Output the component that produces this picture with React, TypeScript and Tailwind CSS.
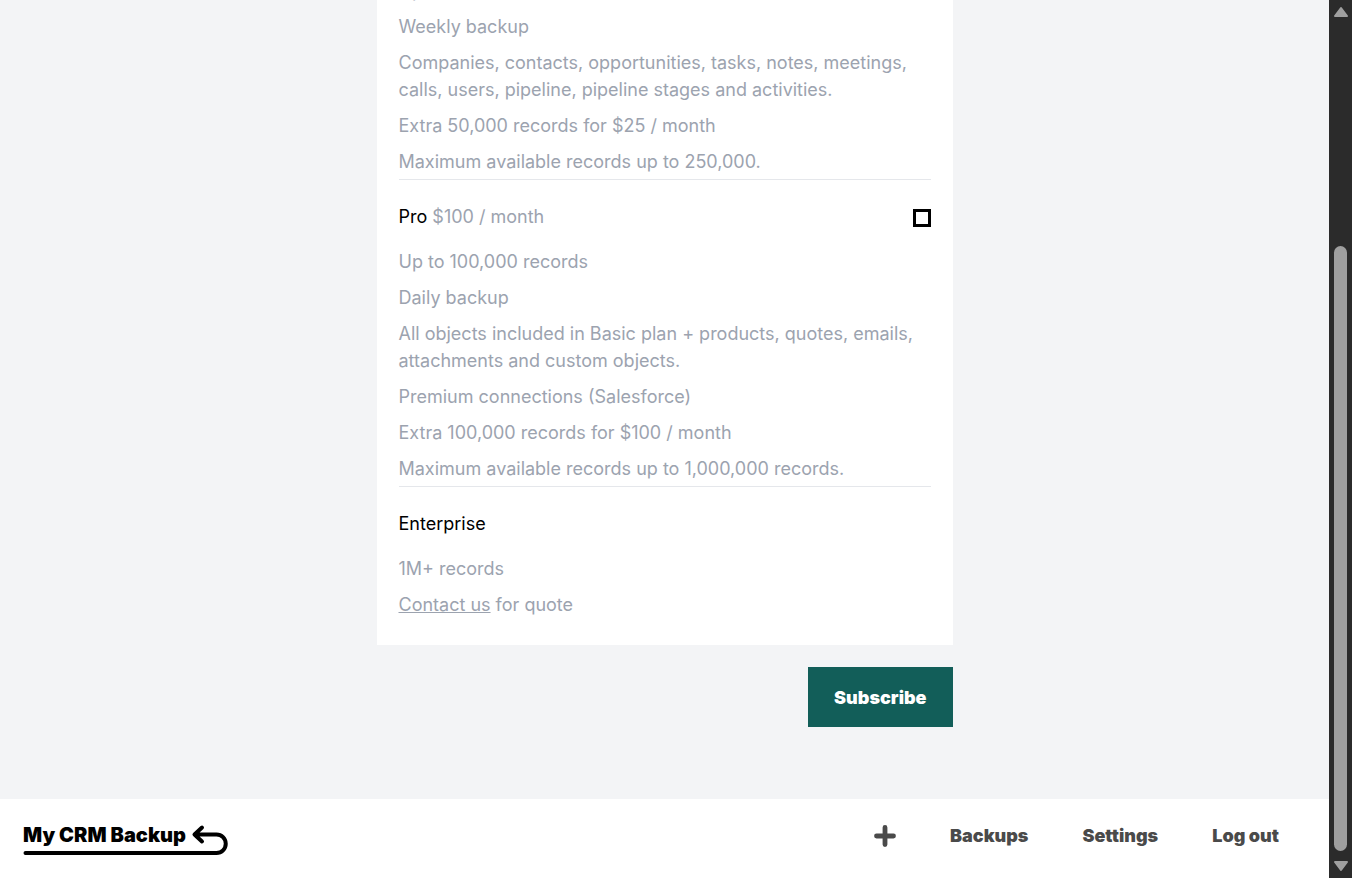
import { useState } from 'react';

interface Plan {
  id: string;
  name: string;
  price: string;
  features: string[];
}

const plans: Plan[] = [
  {
    id: 'basic',
    name: 'Basic',
    price: '$25 / month',
    features: [
      'Up to 50,000 records',
      'Weekly backup',
      'Companies, contacts, opportunities, tasks, notes, meetings, calls, users, pipeline, pipeline stages and activities.',
      'Extra 50,000 records for $25 / month',
      'Maximum available records up to 250,000.',
    ],
  },
  {
    id: 'pro',
    name: 'Pro',
    price: '$100 / month',
    features: [
      'Up to 100,000 records',
      'Daily backup',
      'All objects included in Basic plan + products, quotes, emails, attachments and custom objects.',
      'Premium connections (Salesforce)',
      'Extra 100,000 records for $100 / month',
      'Maximum available records up to 1,000,000 records.',
    ],
  },
];

interface PlanSectionProps {
  plan: Plan;
  checked: boolean;
  onToggle: () => void;
}

function PlanSection({ plan, checked, onToggle }: PlanSectionProps) {
  return (
    <section className="border-b border-gray-200 pt-[23px] pb-1">
      <div className="flex items-end justify-between">
        <label htmlFor={plan.id}>
          <span className="text-black">{plan.name}</span> {plan.price}
        </label>
        <input
          id={plan.id}
          type="checkbox"
          checked={checked}
          onChange={onToggle}
          className="mb-[3px] size-[18px] appearance-none border-3 border-black bg-white checked:bg-black"
        />
      </div>
      <ul className="mt-[18px] flex flex-col gap-[9px]">
        {plan.features.map((feature) => (
          <li key={feature}>{feature}</li>
        ))}
      </ul>
    </section>
  );
}

function Logo() {
  return (
    <a href="#" className="relative block h-9 w-[206px] text-xl leading-7 font-black text-black">
      My CRM Backup
      <svg viewBox="0 0 206 36" fill="none" className="absolute inset-0 h-full w-full">
        <path
          d="M2.500 32H193.500a9.250 9.250 0 0 0 0-18.500H171.500M179 6.500L171.500 13.500L179 20.500"
          stroke="currentColor"
          strokeWidth="4"
          strokeLinecap="round"
          strokeLinejoin="round"
        />
      </svg>
    </a>
  );
}

function Footer() {
  return (
    <footer className="flex items-start justify-between bg-white pt-[22px] pr-[50px] pb-[21px] pl-[23px]">
      <Logo />
      <nav className="flex items-center gap-[54px] pt-px font-black text-[#4a4a4a]">
        <button type="button" aria-label="Add backup">
          <svg viewBox="0 0 22 22" className="size-[22px]">
            <path d="M11 2.500v17M2.500 11h17" stroke="currentColor" strokeWidth="4.800" strokeLinecap="round" />
          </svg>
        </button>
        <a href="#">Backups</a>
        <a href="#">Settings</a>
        <a href="#">Log out</a>
      </nav>
    </footer>
  );
}

function ScrollRail() {
  return (
    <div aria-hidden="true" className="flex w-[23px] shrink-0 flex-col items-center bg-[#2b2b2b] py-[6px] text-[#9f9f9f]">
      <svg viewBox="0 0 16 12" className="h-3 w-4">
        <path d="M8 2L14 10H2Z" fill="currentColor" stroke="currentColor" strokeWidth="2" strokeLinejoin="round" />
      </svg>
      <div className="grow-[228]" />
      <div className="w-[13px] grow-[605] rounded-full bg-[#9f9f9f]" />
      <div className="grow-[9]" />
      <svg viewBox="0 0 16 12" className="h-3 w-4">
        <path d="M8 10L2 2H14Z" fill="currentColor" stroke="currentColor" strokeWidth="2" strokeLinejoin="round" />
      </svg>
    </div>
  );
}

export default function App() {
  const [selected, setSelected] = useState<string | null>(null);

  const toggle = (id: string) => setSelected(selected === id ? null : id);

  return (
    <div className="flex h-screen font-['Inter',sans-serif] text-lg leading-[27px]">
      {/* Page is scrolled to its end, so content sits against the bottom */}
      <div className="flex min-w-0 flex-1 flex-col justify-end overflow-hidden bg-gray-100">
        <main className="mx-auto w-full max-w-xl pb-[72px]">
          <div className="bg-white px-[22px] pb-[27px] text-[#9ca3af]">
            {plans.map((plan) => (
              <PlanSection
                key={plan.id}
                plan={plan}
                checked={selected === plan.id}
                onToggle={() => toggle(plan.id)}
              />
            ))}
            <section className="pt-[23px]">
              <h2 className="text-black">Enterprise</h2>
              <ul className="mt-[18px] flex flex-col gap-[9px]">
                <li>1M+ records</li>
                <li>
                  <a href="#" className="underline">Contact us</a> for quote
                </li>
              </ul>
            </section>
          </div>
          <div className="mt-[22px] flex justify-end">
            <button type="button" className="h-[60px] bg-[#125e59] px-[26px] font-black text-white">
              Subscribe
            </button>
          </div>
        </main>
        <Footer />
      </div>
      <ScrollRail />
    </div>
  );
}
